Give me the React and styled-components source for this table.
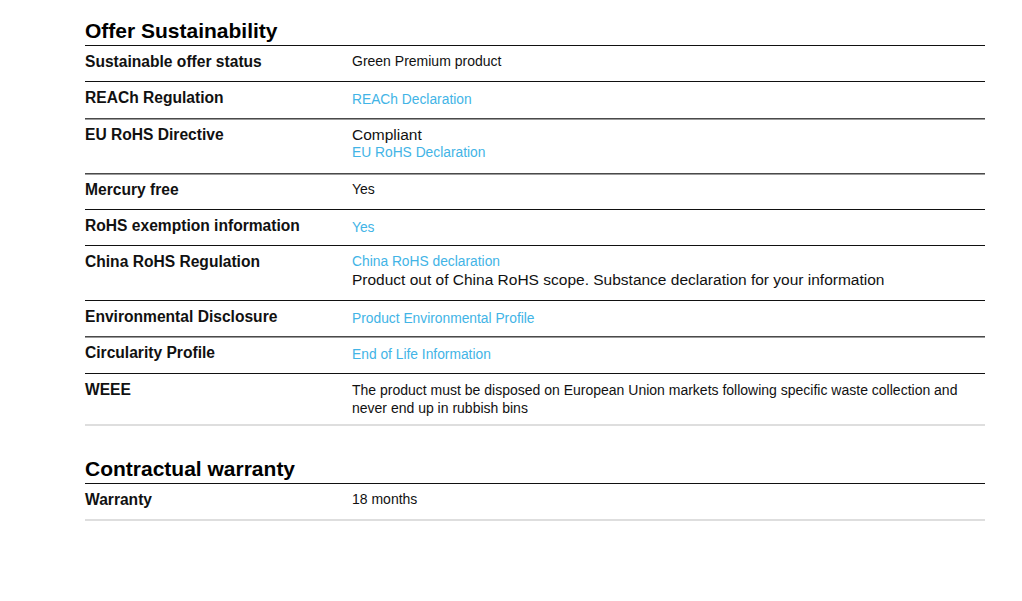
import React from "react";
import styled, { createGlobalStyle } from "styled-components";

const Global = createGlobalStyle`
  html, body { margin: 0; padding: 0; background: #fff; }
  body { font-family: "Liberation Sans", Arial, sans-serif; color: #111; }
`;

const Page = styled.div`
  width: 900px;
  padding: 19px 0 40px 85px;
`;

const Section = styled.section`
  & + & { margin-top: 31px; }
`;

const Heading = styled.h2`
  margin: 0 0 2px;
  font-size: 21px;
  line-height: 24px;
  font-weight: 700;
  color: #000;
`;

const Table = styled.div`
  display: flex;
  flex-direction: column;
  border-bottom: 2px solid #dedede;
`;

const Row = styled.div`
  display: grid;
  grid-template-columns: 267px 1fr;
  align-items: start;
  padding: 7px 0 ${(p) => (p.$tight ? 7 : p.$extra ? 12 : 11)}px;
  border-top: 1px solid ${(p) => (p.$soft ? "#4a4a4a" : "#111")};
  box-shadow: ${(p) => (p.$soft ? "inset 0 1px 0 #9a9a9a" : "none")};
`;

const Label = styled.div`
  font-size: 15.6px;
  line-height: 17px;
  font-weight: 700;
  color: #111;
`;

const Values = styled.div`
  display: flex;
  flex-direction: column;
`;

const Text = styled.div`
  font-size: ${(p) => (p.$large ? "15.5px" : "14px")};
  line-height: ${(p) => (p.$large ? "18px" : "17px")};
  color: #111;
`;

const Link = styled.a`
  display: block;
  font-size: 13.8px;
  line-height: ${(p) => (p.$single ? "17px" : "18px")};
  color: #42b4e6;
  text-decoration: none;
  margin-top: ${(p) => (p.$single ? "2px" : "0")};
  margin-bottom: ${(p) => (p.$single ? "-2px" : "0")};
`;

const Para = styled.div`
  font-size: 14px;
  line-height: 18px;
  color: #111;
  max-width: 610px;
`;

export default function App() {
  return (
    <>
      <Global />
      <Page>
        <Section>
          <Heading>Offer Sustainability</Heading>
          <Table>
            <Row>
              <Label>Sustainable offer status</Label>
              <Values><Text>Green Premium product</Text></Values>
            </Row>
            <Row $extra>
              <Label>REACh Regulation</Label>
              <Values><Link $single href="#">REACh Declaration</Link></Values>
            </Row>
            <Row $soft>
              <Label>EU RoHS Directive</Label>
              <Values>
                <Text $large>Compliant</Text>
                <Link href="#">EU RoHS Declaration</Link>
              </Values>
            </Row>
            <Row $soft>
              <Label>Mercury free</Label>
              <Values><Text>Yes</Text></Values>
            </Row>
            <Row>
              <Label>RoHS exemption information</Label>
              <Values><Link $single href="#">Yes</Link></Values>
            </Row>
            <Row>
              <Label>China RoHS Regulation</Label>
              <Values>
                <Link href="#">China RoHS declaration</Link>
                <Text $large>Product out of China RoHS scope. Substance declaration for your information</Text>
              </Values>
            </Row>
            <Row>
              <Label>Environmental Disclosure</Label>
              <Values><Link $single href="#">Product Environmental Profile</Link></Values>
            </Row>
            <Row $soft $extra>
              <Label>Circularity Profile</Label>
              <Values><Link $single href="#">End of Life Information</Link></Values>
            </Row>
            <Row $tight>
              <Label>WEEE</Label>
              <Values>
                <Para>
                  The product must be disposed on European Union markets following specific waste collection and never end up in rubbish bins
                </Para>
              </Values>
            </Row>
          </Table>
        </Section>
        <Section>
          <Heading>Contractual warranty</Heading>
          <Table>
            <Row>
              <Label>Warranty</Label>
              <Values><Text>18 months</Text></Values>
            </Row>
          </Table>
        </Section>
      </Page>
    </>
  );
}
